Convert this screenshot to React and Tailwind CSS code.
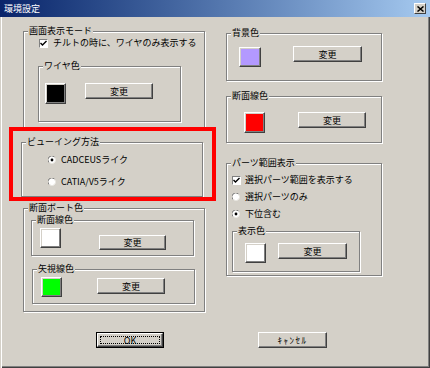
import React from 'react';

const font = { fontFamily: '"Noto Sans CJK JP", "Noto Sans", sans-serif' };

// etched group box with the caption sitting on the top line
function Group({ label, className, children }) {
  return (
    <div className={`relative border border-[#808080] shadow-[inset_1px_1px_0_#fff,1px_1px_0_#fff] ${className}`}>
      <span className="absolute -top-[7px] left-[4px] bg-[#d4d0c8] px-px text-[9px] leading-[12px]">{label}</span>
      {children}
    </div>
  );
}

function Btn({ children, className }) {
  return (
    <button
      type="button"
      className={`flex shrink-0 items-center justify-center border border-t-white border-l-white border-r-[#404040] border-b-[#404040] bg-[#d4d0c8] text-[9px] leading-none shadow-[inset_-1px_-1px_0_#808080] ${className}`}
    >
      {children}
    </button>
  );
}

function Swatch({ className }) {
  return (
    <div className={`shrink-0 border border-t-white border-l-white border-r-[#404040] border-b-[#404040] shadow-[inset_-1px_-1px_0_#808080,inset_1px_1px_0_#d4d0c8] ${className}`} />
  );
}

function Check({ label, className }) {
  return (
    <div className={`flex h-[12px] items-center gap-[5px] text-[9px] ${className}`}>
      <div className="flex h-[9px] w-[9px] shrink-0 items-center justify-center border border-t-[#808080] border-l-[#808080] border-r-white border-b-white bg-white">
        <svg width="7" height="7" viewBox="0 0 7 7">
          <path d="M0.5 3 L2.5 5 L6.5 1" fill="none" stroke="#000" strokeWidth="1.4" />
        </svg>
      </div>
      <span className="whitespace-nowrap">{label}</span>
    </div>
  );
}

function Radio({ label, checked, className }) {
  return (
    <div className={`flex h-[12px] items-center gap-[5px] text-[9px] ${className}`}>
      <svg width="8" height="8" viewBox="0 0 8 8" className="shrink-0">
        <circle cx="4" cy="4" r="3.5" fill="#fff" />
        <path d="M1 6.5 A3.5 3.5 0 0 1 6.5 1" fill="none" stroke="#808080" strokeWidth="1" />
        <path d="M6.5 1.5 A3.5 3.5 0 0 1 1.5 6.5" fill="none" stroke="#e8e6e0" strokeWidth="1" />
        {checked && <circle cx="4" cy="4" r="1.4" fill="#000" />}
      </svg>
      <span className="whitespace-nowrap">{label}</span>
    </div>
  );
}

export default function App() {
  return (
    <div
      style={font}
      className="relative h-[368px] w-[430px] overflow-hidden bg-[#d4d0c8] text-black shadow-[inset_1px_0_0_#d4d0c8,inset_2px_0_0_#fff,inset_-1px_-1px_0_#404040,inset_-2px_-2px_0_#808080]"
    >
      {/* title bar */}
      <div className="flex h-[17px] items-center justify-between bg-gradient-to-r from-[#0a246a] to-[#a6caf0] pl-[4px] pr-[4px]">
        <span className="text-[9px] leading-none text-white">環境設定</span>
        <div className="flex h-[11px] w-[12px] items-center justify-center border border-t-white border-l-white border-r-[#404040] border-b-[#404040] bg-[#d4d0c8]">
          <svg width="7" height="6" viewBox="0 0 7 6">
            <path d="M0.5 0.5 L6.5 5.5 M6.5 0.5 L0.5 5.5" stroke="#000" strokeWidth="1.5" />
          </svg>
        </div>
      </div>

      <div className="flex h-[295px] items-start pl-[23px]">
        {/* left column */}
        <div className="flex w-[182px] flex-col">
          <Group label="画面表示モード" className="mt-[14px] h-[99px] w-[182px]">
            <Check label="チルトの時に、ワイヤのみ表示する" className="ml-[15px] mt-[5px]" />
            <Group label="ワイヤ色" className="ml-[14px] mt-[17px] h-[56px] w-[143px]">
              <div className="flex items-start">
                <Swatch className="ml-[6px] mt-[16px] h-[21px] w-[21px] bg-black" />
                <Btn className="ml-[19px] mt-[16px] h-[16px] w-[68px]">変更</Btn>
              </div>
            </Group>
          </Group>

          <Group label="ビューイング方法" className="-ml-[2px] mt-[12px] h-[55px] w-[182px]">
            <Radio label="CADCEUSライク" checked className="ml-[26px] mt-[11px]" />
            <Radio label="CATIA/V5ライク" className="ml-[26px] mt-[10px]" />
          </Group>

          <Group label="断面ボート色" className="mt-[11px] h-[104px] w-[182px]">
            <Group label="断面線色" className="ml-[7px] mt-[11px] h-[36px] w-[163px]">
              <div className="flex items-start">
                <Swatch className="ml-[8px] mt-[7px] h-[20px] w-[21px] bg-white" />
                <Btn className="ml-[38px] mt-[14px] h-[15px] w-[67px]">変更</Btn>
              </div>
            </Group>
            <Group label="矢視線色" className="ml-[8px] mt-[13px] h-[35px] w-[163px]">
              <div className="flex items-start">
                <Swatch className="ml-[8px] mt-[7px] h-[20px] w-[21px] bg-[#00ff00]" />
                <Btn className="ml-[35px] mt-[8px] h-[16px] w-[68px]">変更</Btn>
              </div>
            </Group>
          </Group>
        </div>

        {/* right column */}
        <div className="ml-[21px] flex w-[156px] flex-col">
          <Group label="背景色" className="mt-[16px] h-[48px] w-[156px]">
            <div className="flex items-start">
              <Swatch className="ml-[12px] mt-[13px] h-[20px] w-[22px] bg-[#b399ff]" />
              <Btn className="ml-[32px] mt-[12px] h-[16px] w-[69px]">変更</Btn>
            </div>
          </Group>

          <Group label="断面線色" className="mt-[15px] h-[47px] w-[156px]">
            <div className="flex items-start">
              <Swatch className="ml-[17px] mt-[15px] h-[21px] w-[21px] bg-[#ff0000]" />
              <Btn className="ml-[33px] mt-[15px] h-[16px] w-[68px]">変更</Btn>
            </div>
          </Group>

          <Group label="パーツ範囲表示" className="mt-[20px] h-[113px] w-[156px]">
            <Check label="選択パーツ範囲を表示する" className="ml-[5px] mt-[10px] !gap-[4px]" />
            <Radio label="選択パーツのみ" className="ml-[5px] mt-[5px]" />
            <Radio label="下位含む" checked className="ml-[5px] mt-[5px]" />
            <Group label="表示色" className="ml-[5px] mt-[11px] h-[41px] w-[128px]">
              <div className="flex items-start">
                <Swatch className="ml-[12px] mt-[11px] h-[20px] w-[21px] bg-white" />
                <Btn className="ml-[12px] mt-[11px] h-[16px] w-[69px]">変更</Btn>
              </div>
            </Group>
          </Group>
        </div>
      </div>

      {/* dialog buttons */}
      <div className="mt-[20px] flex items-start pl-[96px]">
        <div className="h-[16px] w-[68px] border border-black">
          <Btn className="relative h-full w-full">
            <span className="absolute inset-[2px] border border-dotted border-black" />
            OK
          </Btn>
        </div>
        <Btn className="ml-[94px] h-[16px] w-[69px] tracking-[1.5px]">ｷｬﾝｾﾙ</Btn>
      </div>

      {/* red annotation frame */}
      <div className="pointer-events-none absolute left-[9px] top-[127px] h-[74px] w-[207px] border-4 border-[#ff0000]" />
    </div>
  );
}
